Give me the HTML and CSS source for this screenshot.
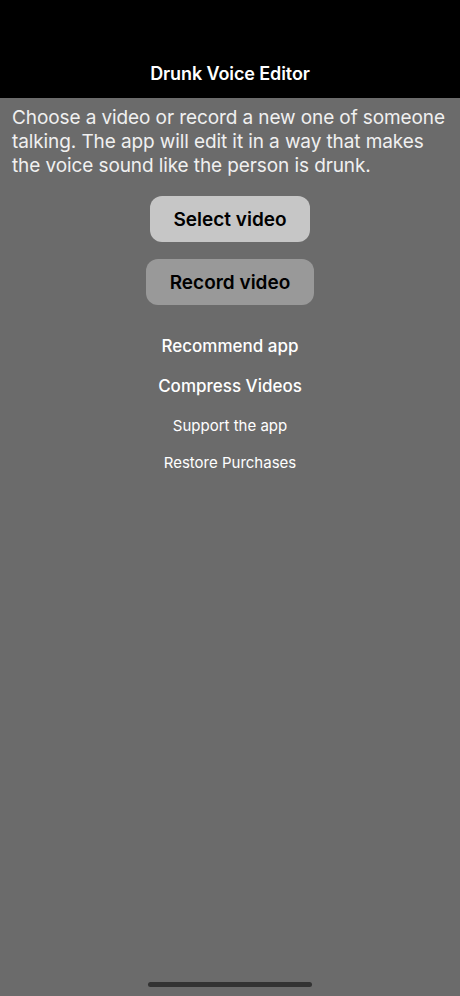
FILE: index.html
```html
<!DOCTYPE html>
<html lang="en">
<head>
    <meta charset="UTF-8">
    <meta name="viewport" content="width=device-width, initial-scale=1.0">
    <title>Drunk Voice Editor</title>
    <link rel="stylesheet" href="styles.css">
</head>
<body>
    <div class="header">
        <h1>Drunk Voice Editor</h1>
    </div>

    <div class="container">
        <p class="intro">Choose a video or record a new one of someone talking. The app will edit it in a way that makes the voice sound like the person is drunk.</p>

        <button class="btn btn-select">Select video</button>
        <button class="btn btn-record">Record video</button>

        <a class="link link-big" href="#">Recommend app</a>
        <a class="link link-big" href="#">Compress Videos</a>
        <a class="link link-small" href="#">Support the app</a>
        <a class="link link-small" href="#">Restore Purchases</a>
    </div>

    <div class="home-bar"></div>
</body>
</html>
```

FILE: styles.css
```css
* {
    margin: 0;
    padding: 0;
    box-sizing: border-box;
}

body {
    font-family: 'Inter', 'Roboto', sans-serif;
    background: #6b6b6b;
    color: #f3f3f3;
    height: 996px;
    display: flex;
    flex-direction: column;
    overflow: hidden;
}

.header {
    background: #000;
    height: 98px;
    display: flex;
    align-items: flex-end;
    justify-content: center;
    padding-bottom: 14px;
}

.header h1 {
    font-size: 18px;
    font-weight: 600;
    color: #ffffff;
    letter-spacing: -0.1px;
}

.container {
    flex: 1;
    display: flex;
    flex-direction: column;
    align-items: center;
    padding: 8px 0 0;
}

.intro {
    align-self: stretch;
    padding: 0 12px;
    font-size: 19px;
    line-height: 24px;
    color: #f0f0f0;
    letter-spacing: -0.1px;
}

.btn {
    border: none;
    border-radius: 12px;
    font-family: inherit;
    font-size: 19px;
    font-weight: 600;
    color: #000;
    height: 46px;
    cursor: pointer;
}

.btn-select {
    width: 160px;
    margin-top: 18px;
    background: #c6c6c6;
}

.btn-record {
    width: 168px;
    margin-top: 17px;
    background: #999999;
}

.link {
    color: #ffffff;
    text-decoration: none;
}

.link-big {
    font-size: 17px;
    font-weight: 500;
}

.link-big:first-of-type {
    margin-top: 31px;
}

.link-big + .link-big {
    margin-top: 20px;
}

.link-small {
    font-size: 15px;
    margin-top: 20px;
}

.link-small + .link-small {
    margin-top: 18px;
}

.home-bar {
    position: absolute;
    left: 148px;
    bottom: 9px;
    width: 164px;
    height: 5px;
    border-radius: 3px;
    background: #333;
}
```
